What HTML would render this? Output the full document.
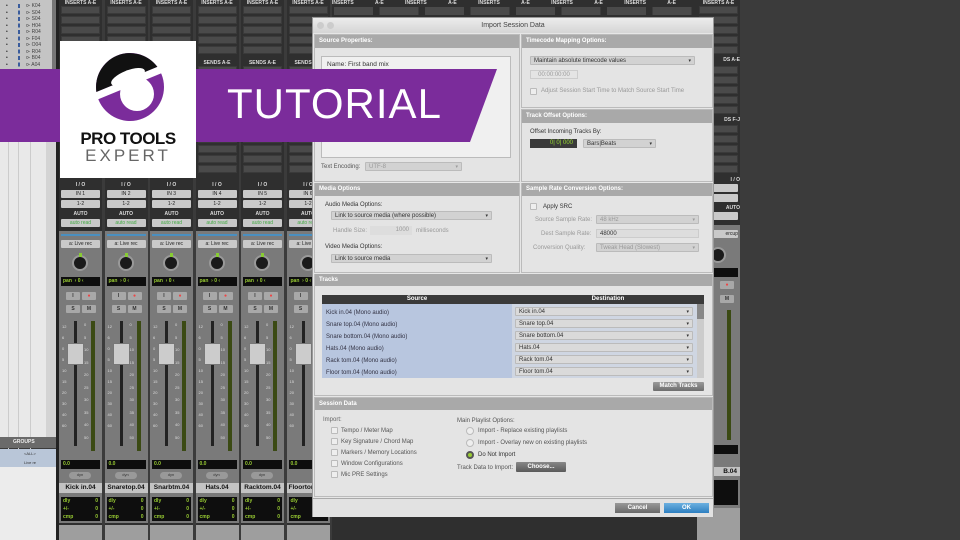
<!DOCTYPE html>
<html><head><meta charset="utf-8"><style>
*{margin:0;padding:0;box-sizing:border-box}
body{width:960px;height:540px;overflow:hidden;background:#3b3b3b;font-family:"Liberation Sans",sans-serif;position:relative}
.a{position:absolute}
.s{position:absolute;top:0;width:43px;height:540px;background:#2f2f2f}
.s .t{position:absolute;left:0;width:43px;text-align:center;color:#ddd;font-size:5px;font-weight:bold}
.sl{position:absolute;left:2px;width:39px;height:8px;background:#4a4a4a;border:1px solid #3a3a3a}
.bx{position:absolute;left:2px;width:39px;height:8px;background:#c9c9c9;border-radius:1px;font-size:5px;text-align:center;line-height:8px;color:#222}
.low{position:absolute;left:0;top:231px;width:43px;height:292px;background:#7a7a7a}
.blk{position:absolute;background:#0e0e0e;color:#9c3;font-size:5px;font-weight:bold;line-height:8px}
.btn{position:absolute;width:14px;height:8px;background:#a8a8a8;border-radius:1px;font-size:5px;text-align:center;line-height:8px;font-weight:bold;color:#333}
.sc{position:absolute;font-size:4px;color:#ddd}
.dlg{position:absolute;left:312px;top:17px;width:402px;height:500px;background:#e6e6e6;border:1px solid #999;font-size:6px;color:#333}
.ph{position:absolute;background:#a9a9a9;color:#fff;font-weight:bold;font-size:6px;line-height:13px;padding-left:4px}
.pn{position:absolute;background:#e4e4e4;border:1px solid #bbb}
.dd{position:absolute;height:9px;background:#d2d2d2;border:1px solid #bbb;border-radius:1px;font-size:6px;line-height:8px;padding-left:3px;color:#333}
.dd:after{content:"▾";position:absolute;right:3px;top:0;font-size:5px}
.cb{position:absolute;width:7px;height:7px;border:1px solid #bbb;background:#eee;border-radius:1px}
.rd{position:absolute;width:8px;height:8px;border:1px solid #bbb;background:#eee;border-radius:50%}
.g{color:#999}
</style></head><body>

<!-- left panel -->
<div class="a" style="left:0;top:0;width:56px;height:70px;background:#c4c4c4"></div>
<div class="a" style="left:52px;top:0;width:4px;height:70px;background:#777"></div>
<div class="a" style="left:0;top:142px;width:56px;height:296px;background:#e9e9e9"></div>
<div class="a" style="left:8px;top:142px;width:1px;height:380px;background:#ccc"></div>
<div class="a" style="left:18px;top:142px;width:1px;height:380px;background:#ccc"></div>
<div class="a" style="left:30px;top:142px;width:1px;height:380px;background:#ccc"></div>
<div class="a" style="left:46px;top:142px;width:10px;height:300px;background:#d4d4d4"></div>
<div class="a" style="left:0;top:449px;width:56px;height:91px;background:#ececec"></div>
<div class="a" style="left:0;top:437px;width:56px;height:11px;background:#6a6a6a;color:#eee;font-size:5px;font-weight:bold;line-height:11px;padding-left:13px">GROUPS</div>
<div class="a" style="left:0;top:449px;width:56px;height:18px;background:#b9c6d8;font-size:4px;line-height:9px;padding-left:24px;color:#333">&lt;ALL&gt;<br>Live re</div>
<div class="a" style="left:26px;top:3px;font-size:5px;line-height:6.5px;color:#444;white-space:nowrap">⊳ K04<br>⊳ S04<br>⊳ S04<br>⊳ H04<br>⊳ R04<br>⊳ F04<br>⊳ O04<br>⊳ R04<br>⊳ B04<br>⊳ A04</div>
<div class="a" style="left:6px;top:3px;font-size:5px;line-height:6.5px;color:#222">•<br>•<br>•<br>•<br>•<br>•<br>•<br>•<br>•<br>•</div>
<div class="a" style="left:18px;top:4px;width:2px;height:64px;background:repeating-linear-gradient(#3a5c9c 0 4px,transparent 4px 6.5px)"></div>
<div class="a" style="left:56px;top:0;width:3px;height:540px;background:#222"></div>

<!-- strips -->
<div class="s" style="left:59px">
<div class="t" style="top:0">INSERTS A-E</div>
<div class="sl" style="top:6px"></div><div class="sl" style="top:16px"></div><div class="sl" style="top:26px"></div><div class="sl" style="top:36px"></div><div class="sl" style="top:46px"></div>
<div class="t" style="top:60px">SENDS A-E</div>
<div class="sl" style="top:66px"></div><div class="sl" style="top:76px"></div><div class="sl" style="top:86px"></div><div class="sl" style="top:96px"></div><div class="sl" style="top:106px"></div>
<div class="sl" style="top:125px"></div><div class="sl" style="top:135px"></div><div class="sl" style="top:145px"></div><div class="sl" style="top:155px"></div><div class="sl" style="top:165px"></div>
<div class="t" style="top:182px">I / O</div><div class="bx" style="top:190px">IN 1</div><div class="bx" style="top:200px">1-2</div>
<div class="t" style="top:211px">AUTO</div><div class="bx" style="top:219px;color:#4a4">auto read</div>
<div class="low"><div class="a" style="left:2px;top:3px;width:39px;height:2px;background:#4a8fc0"></div><div class="bx" style="top:9px">a: Live rec</div>
<div class="a" style="left:13px;top:24px;width:16px;height:16px;border-radius:50%;background:#1a1a1a;border:2px solid #999"></div><div class="a" style="left:20px;top:22px;width:3px;height:4px;background:#8c3"></div>
<div class="blk" style="left:2px;top:46px;width:39px;height:9px;padding-left:2px">pan &nbsp;› 0 ‹</div>
<div class="btn" style="left:7px;top:61px">I</div><div class="btn" style="left:23px;top:61px;color:#e44">●</div>
<div class="btn" style="left:7px;top:74px">S</div><div class="btn" style="left:23px;top:74px">M</div>
<div class="a" style="left:15px;top:90px;width:3px;height:125px;background:#222"></div>
<div class="a" style="left:8px;top:112px;width:17px;height:22px;background:#ccc;border:1px solid #777"></div>
<div class="a" style="left:32px;top:90px;width:4px;height:130px;background:#3b4a14"></div>
<div class="sc" style="left:3px;top:90px;line-height:11px">12<br>6<br>0<br>5<br>10<br>15<br>20<br>30<br>40<br>60</div>
<div class="sc" style="left:25px;top:88px;line-height:12.5px">0<br>5<br>10<br>15<br>20<br>25<br>30<br>35<br>40<br>50</div>
<div class="blk" style="left:2px;top:229px;width:39px;height:9px;padding-left:2px">0.0</div>
<div class="a" style="left:10px;top:241px;width:22px;height:7px;border-radius:4px;background:#999;font-size:4px;text-align:center;color:#333">dyn</div>
<div class="a" style="left:0;top:252px;width:43px;height:10px;background:#c3c3c3;font-size:6.5px;font-weight:bold;text-align:center;line-height:10px;color:#111">Kick in.04</div>
<div class="blk" style="left:2px;top:266px;width:39px;height:24px;padding:0 2px;line-height:8px">dly<span style="float:right">0</span><br>+/-<span style="float:right">0</span><br>cmp<span style="float:right">0</span></div>
</div>
<div class="a" style="left:0;top:525px;width:43px;height:15px;background:#9e9e9e"></div>
</div>

<div class="s" style="left:104.5px">
<div class="t" style="top:0">INSERTS A-E</div>
<div class="sl" style="top:6px"></div><div class="sl" style="top:16px"></div><div class="sl" style="top:26px"></div><div class="sl" style="top:36px"></div><div class="sl" style="top:46px"></div>
<div class="t" style="top:60px">SENDS A-E</div>
<div class="sl" style="top:66px"></div><div class="sl" style="top:76px"></div><div class="sl" style="top:86px"></div><div class="sl" style="top:96px"></div><div class="sl" style="top:106px"></div>
<div class="sl" style="top:125px"></div><div class="sl" style="top:135px"></div><div class="sl" style="top:145px"></div><div class="sl" style="top:155px"></div><div class="sl" style="top:165px"></div>
<div class="t" style="top:182px">I / O</div><div class="bx" style="top:190px">IN 2</div><div class="bx" style="top:200px">1-2</div>
<div class="t" style="top:211px">AUTO</div><div class="bx" style="top:219px;color:#4a4">auto read</div>
<div class="low"><div class="a" style="left:2px;top:3px;width:39px;height:2px;background:#4a8fc0"></div><div class="bx" style="top:9px">a: Live rec</div>
<div class="a" style="left:13px;top:24px;width:16px;height:16px;border-radius:50%;background:#1a1a1a;border:2px solid #999"></div><div class="a" style="left:20px;top:22px;width:3px;height:4px;background:#8c3"></div>
<div class="blk" style="left:2px;top:46px;width:39px;height:9px;padding-left:2px">pan &nbsp;› 0 ‹</div>
<div class="btn" style="left:7px;top:61px">I</div><div class="btn" style="left:23px;top:61px;color:#e44">●</div>
<div class="btn" style="left:7px;top:74px">S</div><div class="btn" style="left:23px;top:74px">M</div>
<div class="a" style="left:15px;top:90px;width:3px;height:125px;background:#222"></div>
<div class="a" style="left:8px;top:112px;width:17px;height:22px;background:#ccc;border:1px solid #777"></div>
<div class="a" style="left:32px;top:90px;width:4px;height:130px;background:#3b4a14"></div>
<div class="sc" style="left:3px;top:90px;line-height:11px">12<br>6<br>0<br>5<br>10<br>15<br>20<br>30<br>40<br>60</div>
<div class="sc" style="left:25px;top:88px;line-height:12.5px">0<br>5<br>10<br>15<br>20<br>25<br>30<br>35<br>40<br>50</div>
<div class="blk" style="left:2px;top:229px;width:39px;height:9px;padding-left:2px">0.0</div>
<div class="a" style="left:10px;top:241px;width:22px;height:7px;border-radius:4px;background:#999;font-size:4px;text-align:center;color:#333">dyn</div>
<div class="a" style="left:0;top:252px;width:43px;height:10px;background:#c3c3c3;font-size:6.5px;font-weight:bold;text-align:center;line-height:10px;color:#111">Snaretop.04</div>
<div class="blk" style="left:2px;top:266px;width:39px;height:24px;padding:0 2px;line-height:8px">dly<span style="float:right">0</span><br>+/-<span style="float:right">0</span><br>cmp<span style="float:right">0</span></div>
</div>
<div class="a" style="left:0;top:525px;width:43px;height:15px;background:#9e9e9e"></div>
</div>

<div class="s" style="left:150px">
<div class="t" style="top:0">INSERTS A-E</div>
<div class="sl" style="top:6px"></div><div class="sl" style="top:16px"></div><div class="sl" style="top:26px"></div><div class="sl" style="top:36px"></div><div class="sl" style="top:46px"></div>
<div class="t" style="top:60px">SENDS A-E</div>
<div class="sl" style="top:66px"></div><div class="sl" style="top:76px"></div><div class="sl" style="top:86px"></div><div class="sl" style="top:96px"></div><div class="sl" style="top:106px"></div>
<div class="sl" style="top:125px"></div><div class="sl" style="top:135px"></div><div class="sl" style="top:145px"></div><div class="sl" style="top:155px"></div><div class="sl" style="top:165px"></div>
<div class="t" style="top:182px">I / O</div><div class="bx" style="top:190px">IN 3</div><div class="bx" style="top:200px">1-2</div>
<div class="t" style="top:211px">AUTO</div><div class="bx" style="top:219px;color:#4a4">auto read</div>
<div class="low"><div class="a" style="left:2px;top:3px;width:39px;height:2px;background:#4a8fc0"></div><div class="bx" style="top:9px">a: Live rec</div>
<div class="a" style="left:13px;top:24px;width:16px;height:16px;border-radius:50%;background:#1a1a1a;border:2px solid #999"></div><div class="a" style="left:20px;top:22px;width:3px;height:4px;background:#8c3"></div>
<div class="blk" style="left:2px;top:46px;width:39px;height:9px;padding-left:2px">pan &nbsp;› 0 ‹</div>
<div class="btn" style="left:7px;top:61px">I</div><div class="btn" style="left:23px;top:61px;color:#e44">●</div>
<div class="btn" style="left:7px;top:74px">S</div><div class="btn" style="left:23px;top:74px">M</div>
<div class="a" style="left:15px;top:90px;width:3px;height:125px;background:#222"></div>
<div class="a" style="left:8px;top:112px;width:17px;height:22px;background:#ccc;border:1px solid #777"></div>
<div class="a" style="left:32px;top:90px;width:4px;height:130px;background:#3b4a14"></div>
<div class="sc" style="left:3px;top:90px;line-height:11px">12<br>6<br>0<br>5<br>10<br>15<br>20<br>30<br>40<br>60</div>
<div class="sc" style="left:25px;top:88px;line-height:12.5px">0<br>5<br>10<br>15<br>20<br>25<br>30<br>35<br>40<br>50</div>
<div class="blk" style="left:2px;top:229px;width:39px;height:9px;padding-left:2px">0.0</div>
<div class="a" style="left:10px;top:241px;width:22px;height:7px;border-radius:4px;background:#999;font-size:4px;text-align:center;color:#333">dyn</div>
<div class="a" style="left:0;top:252px;width:43px;height:10px;background:#c3c3c3;font-size:6.5px;font-weight:bold;text-align:center;line-height:10px;color:#111">Snarbtm.04</div>
<div class="blk" style="left:2px;top:266px;width:39px;height:24px;padding:0 2px;line-height:8px">dly<span style="float:right">0</span><br>+/-<span style="float:right">0</span><br>cmp<span style="float:right">0</span></div>
</div>
<div class="a" style="left:0;top:525px;width:43px;height:15px;background:#9e9e9e"></div>
</div>

<div class="s" style="left:195.5px">
<div class="t" style="top:0">INSERTS A-E</div>
<div class="sl" style="top:6px"></div><div class="sl" style="top:16px"></div><div class="sl" style="top:26px"></div><div class="sl" style="top:36px"></div><div class="sl" style="top:46px"></div>
<div class="t" style="top:60px">SENDS A-E</div>
<div class="sl" style="top:66px"></div><div class="sl" style="top:76px"></div><div class="sl" style="top:86px"></div><div class="sl" style="top:96px"></div><div class="sl" style="top:106px"></div>
<div class="sl" style="top:125px"></div><div class="sl" style="top:135px"></div><div class="sl" style="top:145px"></div><div class="sl" style="top:155px"></div><div class="sl" style="top:165px"></div>
<div class="t" style="top:182px">I / O</div><div class="bx" style="top:190px">IN 4</div><div class="bx" style="top:200px">1-2</div>
<div class="t" style="top:211px">AUTO</div><div class="bx" style="top:219px;color:#4a4">auto read</div>
<div class="low"><div class="a" style="left:2px;top:3px;width:39px;height:2px;background:#4a8fc0"></div><div class="bx" style="top:9px">a: Live rec</div>
<div class="a" style="left:13px;top:24px;width:16px;height:16px;border-radius:50%;background:#1a1a1a;border:2px solid #999"></div><div class="a" style="left:20px;top:22px;width:3px;height:4px;background:#8c3"></div>
<div class="blk" style="left:2px;top:46px;width:39px;height:9px;padding-left:2px">pan &nbsp;› 0 ‹</div>
<div class="btn" style="left:7px;top:61px">I</div><div class="btn" style="left:23px;top:61px;color:#e44">●</div>
<div class="btn" style="left:7px;top:74px">S</div><div class="btn" style="left:23px;top:74px">M</div>
<div class="a" style="left:15px;top:90px;width:3px;height:125px;background:#222"></div>
<div class="a" style="left:8px;top:112px;width:17px;height:22px;background:#ccc;border:1px solid #777"></div>
<div class="a" style="left:32px;top:90px;width:4px;height:130px;background:#3b4a14"></div>
<div class="sc" style="left:3px;top:90px;line-height:11px">12<br>6<br>0<br>5<br>10<br>15<br>20<br>30<br>40<br>60</div>
<div class="sc" style="left:25px;top:88px;line-height:12.5px">0<br>5<br>10<br>15<br>20<br>25<br>30<br>35<br>40<br>50</div>
<div class="blk" style="left:2px;top:229px;width:39px;height:9px;padding-left:2px">0.0</div>
<div class="a" style="left:10px;top:241px;width:22px;height:7px;border-radius:4px;background:#999;font-size:4px;text-align:center;color:#333">dyn</div>
<div class="a" style="left:0;top:252px;width:43px;height:10px;background:#c3c3c3;font-size:6.5px;font-weight:bold;text-align:center;line-height:10px;color:#111">Hats.04</div>
<div class="blk" style="left:2px;top:266px;width:39px;height:24px;padding:0 2px;line-height:8px">dly<span style="float:right">0</span><br>+/-<span style="float:right">0</span><br>cmp<span style="float:right">0</span></div>
</div>
<div class="a" style="left:0;top:525px;width:43px;height:15px;background:#9e9e9e"></div>
</div>

<div class="s" style="left:241px">
<div class="t" style="top:0">INSERTS A-E</div>
<div class="sl" style="top:6px"></div><div class="sl" style="top:16px"></div><div class="sl" style="top:26px"></div><div class="sl" style="top:36px"></div><div class="sl" style="top:46px"></div>
<div class="t" style="top:60px">SENDS A-E</div>
<div class="sl" style="top:66px"></div><div class="sl" style="top:76px"></div><div class="sl" style="top:86px"></div><div class="sl" style="top:96px"></div><div class="sl" style="top:106px"></div>
<div class="sl" style="top:125px"></div><div class="sl" style="top:135px"></div><div class="sl" style="top:145px"></div><div class="sl" style="top:155px"></div><div class="sl" style="top:165px"></div>
<div class="t" style="top:182px">I / O</div><div class="bx" style="top:190px">IN 5</div><div class="bx" style="top:200px">1-2</div>
<div class="t" style="top:211px">AUTO</div><div class="bx" style="top:219px;color:#4a4">auto read</div>
<div class="low"><div class="a" style="left:2px;top:3px;width:39px;height:2px;background:#4a8fc0"></div><div class="bx" style="top:9px">a: Live rec</div>
<div class="a" style="left:13px;top:24px;width:16px;height:16px;border-radius:50%;background:#1a1a1a;border:2px solid #999"></div><div class="a" style="left:20px;top:22px;width:3px;height:4px;background:#8c3"></div>
<div class="blk" style="left:2px;top:46px;width:39px;height:9px;padding-left:2px">pan &nbsp;› 0 ‹</div>
<div class="btn" style="left:7px;top:61px">I</div><div class="btn" style="left:23px;top:61px;color:#e44">●</div>
<div class="btn" style="left:7px;top:74px">S</div><div class="btn" style="left:23px;top:74px">M</div>
<div class="a" style="left:15px;top:90px;width:3px;height:125px;background:#222"></div>
<div class="a" style="left:8px;top:112px;width:17px;height:22px;background:#ccc;border:1px solid #777"></div>
<div class="a" style="left:32px;top:90px;width:4px;height:130px;background:#3b4a14"></div>
<div class="sc" style="left:3px;top:90px;line-height:11px">12<br>6<br>0<br>5<br>10<br>15<br>20<br>30<br>40<br>60</div>
<div class="sc" style="left:25px;top:88px;line-height:12.5px">0<br>5<br>10<br>15<br>20<br>25<br>30<br>35<br>40<br>50</div>
<div class="blk" style="left:2px;top:229px;width:39px;height:9px;padding-left:2px">0.0</div>
<div class="a" style="left:10px;top:241px;width:22px;height:7px;border-radius:4px;background:#999;font-size:4px;text-align:center;color:#333">dyn</div>
<div class="a" style="left:0;top:252px;width:43px;height:10px;background:#c3c3c3;font-size:6.5px;font-weight:bold;text-align:center;line-height:10px;color:#111">Racktom.04</div>
<div class="blk" style="left:2px;top:266px;width:39px;height:24px;padding:0 2px;line-height:8px">dly<span style="float:right">0</span><br>+/-<span style="float:right">0</span><br>cmp<span style="float:right">0</span></div>
</div>
<div class="a" style="left:0;top:525px;width:43px;height:15px;background:#9e9e9e"></div>
</div>

<div class="s" style="left:286.5px">
<div class="t" style="top:0">INSERTS A-E</div>
<div class="sl" style="top:6px"></div><div class="sl" style="top:16px"></div><div class="sl" style="top:26px"></div><div class="sl" style="top:36px"></div><div class="sl" style="top:46px"></div>
<div class="t" style="top:60px">SENDS A-E</div>
<div class="sl" style="top:66px"></div><div class="sl" style="top:76px"></div><div class="sl" style="top:86px"></div><div class="sl" style="top:96px"></div><div class="sl" style="top:106px"></div>
<div class="sl" style="top:125px"></div><div class="sl" style="top:135px"></div><div class="sl" style="top:145px"></div><div class="sl" style="top:155px"></div><div class="sl" style="top:165px"></div>
<div class="t" style="top:182px">I / O</div><div class="bx" style="top:190px">IN 6</div><div class="bx" style="top:200px">1-2</div>
<div class="t" style="top:211px">AUTO</div><div class="bx" style="top:219px;color:#4a4">auto read</div>
<div class="low"><div class="a" style="left:2px;top:3px;width:39px;height:2px;background:#4a8fc0"></div><div class="bx" style="top:9px">a: Live rec</div>
<div class="a" style="left:13px;top:24px;width:16px;height:16px;border-radius:50%;background:#1a1a1a;border:2px solid #999"></div>
<div class="blk" style="left:2px;top:46px;width:39px;height:9px;padding-left:2px">pan &nbsp;› 0 ‹</div>
<div class="btn" style="left:7px;top:61px">I</div>
<div class="btn" style="left:7px;top:74px">S</div>
<div class="a" style="left:15px;top:90px;width:3px;height:125px;background:#222"></div>
<div class="a" style="left:8px;top:112px;width:17px;height:22px;background:#ccc;border:1px solid #777"></div>
<div class="sc" style="left:3px;top:90px;line-height:11px">12<br>6<br>0<br>5<br>10<br>15<br>20<br>30<br>40<br>60</div>
<div class="blk" style="left:2px;top:229px;width:39px;height:9px;padding-left:2px">0.0</div>
<div class="a" style="left:0;top:252px;width:43px;height:10px;background:#c3c3c3;font-size:6.5px;font-weight:bold;line-height:10px;color:#111;padding-left:2px">Floortom.04</div>
<div class="blk" style="left:2px;top:266px;width:39px;height:24px;padding:0 2px;line-height:8px">dly<br>+/-<br>cmp</div>
</div>
<div class="a" style="left:0;top:525px;width:43px;height:15px;background:#9e9e9e"></div>
</div>

<!-- strips behind dialog: tops -->
<div class="a" style="left:332px;top:0;width:408px;height:540px;background:#2f2f2f"></div>
<div class="a" style="left:332px;top:0;width:408px;font-size:5px;font-weight:bold;color:#ddd;word-spacing:20px;white-space:nowrap;overflow:hidden">INSERTS&nbsp;A-E INSERTS&nbsp;A-E INSERTS&nbsp;A-E INSERTS&nbsp;A-E INSERTS&nbsp;A-E INSERTS&nbsp;A-E INSERTS&nbsp;A-E INSERTS&nbsp;A-E</div>
<div class="a" style="left:334px;top:7px;width:404px;height:8px;background:repeating-linear-gradient(90deg,#4a4a4a 0 39px,#2f2f2f 39px 45.5px)"></div>

<!-- last visible strip -->
<div class="s" style="left:697px">
<div class="t" style="top:0">INSERTS A-E</div>
<div class="sl" style="top:6px"></div><div class="sl" style="top:16px"></div><div class="sl" style="top:26px"></div><div class="sl" style="top:36px"></div><div class="sl" style="top:46px"></div>
<div class="t" style="top:57px;text-align:right">DS A-E</div>
<div class="sl" style="top:66px"></div><div class="sl" style="top:76px"></div><div class="sl" style="top:86px"></div><div class="sl" style="top:96px"></div><div class="sl" style="top:106px"></div>
<div class="t" style="top:117px;text-align:right">DS F-J</div>
<div class="sl" style="top:125px"></div><div class="sl" style="top:135px"></div><div class="sl" style="top:145px"></div><div class="sl" style="top:155px"></div><div class="sl" style="top:165px"></div>
<div class="t" style="top:177px;text-align:right">I / O</div><div class="bx" style="top:184px"></div><div class="bx" style="top:194px"></div>
<div class="t" style="top:205px;text-align:right">AUTO</div><div class="bx" style="top:212px;color:#4a4"></div>
<div class="low" style="top:225px"><div class="bx" style="top:5px;text-align:right">ercup</div>
<div class="a" style="left:13px;top:22px;width:16px;height:16px;border-radius:50%;background:#1a1a1a;border:2px solid #999"></div>
<div class="blk" style="left:2px;top:43px;width:39px;height:9px"></div>
<div class="btn" style="left:23px;top:56px;color:#e44">●</div><div class="btn" style="left:23px;top:70px">M</div>
<div class="a" style="left:30px;top:85px;width:4px;height:130px;background:#3b4a14"></div>
<div class="blk" style="left:2px;top:220px;width:39px;height:9px"></div>
<div class="a" style="left:0;top:242px;width:43px;height:9px;background:#c3c3c3;font-size:6.5px;font-weight:bold;text-align:right;line-height:9px;color:#111;padding-right:3px">B.04</div>
<div class="blk" style="left:2px;top:255px;width:39px;height:25px"></div>
</div>
<div class="a" style="left:0;top:508px;width:43px;height:32px;background:#9e9e9e"></div>
</div>
<div class="a" style="left:740px;top:0;width:220px;height:540px;background:#3b3b3b"></div>

<!-- dialog -->
<div class="dlg">
<div class="a" style="left:0;top:0;width:400px;height:15px;background:linear-gradient(#ececec,#d5d5d5);text-align:center;font-size:7px;line-height:15px;color:#444">Import Session Data</div>
<div class="a" style="left:4px;top:4px;width:7px;height:7px;border-radius:50%;background:#ccc"></div><div class="a" style="left:14px;top:4px;width:7px;height:7px;border-radius:50%;background:#ccc"></div>
<div class="pn" style="left:1px;top:16px;width:206px;height:148px"></div>
<div class="ph" style="left:2px;top:17px;width:204px">Source Properties:</div>
<div class="a" style="left:8px;top:38px;width:190px;height:102px;background:#f0f0f0;border:1px solid #bbb;font-size:6.5px;padding:3px 5px;line-height:9px">Name: First band mix<br>Type: Current Session</div>
<div class="a g" style="left:8px;top:146px;color:#555">Text Encoding:</div><div class="dd g" style="left:52px;top:144px;width:97px">UTF-8</div>

<div class="pn" style="left:208px;top:16px;width:192px;height:74px"></div>
<div class="ph" style="left:209px;top:17px;width:190px">Timecode Mapping Options:</div>
<div class="dd" style="left:217px;top:38px;width:165px">Maintain absolute timecode values</div>
<div class="a g" style="left:217px;top:52px;width:48px;height:9px;border:1px solid #ccc;text-align:center;line-height:8px">00:00:00:00</div>
<div class="cb" style="left:217px;top:70px"></div><div class="a g" style="left:228px;top:70px">Adjust Session Start Time to Match Source Start Time</div>

<div class="pn" style="left:208px;top:91px;width:192px;height:73px"></div>
<div class="ph" style="left:209px;top:92px;width:190px">Track Offset Options:</div>
<div class="a" style="left:217px;top:111px">Offset Incoming Tracks By:</div>
<div class="a" style="left:217px;top:121px;width:47px;height:9px;background:#3a3a3a;color:#9d3;text-align:right;padding-right:4px;line-height:9px">0| 0| 000</div>
<div class="dd" style="left:270px;top:121px;width:73px">Bars|Beats</div>

<div class="pn" style="left:1px;top:165px;width:206px;height:90px"></div>
<div class="ph" style="left:2px;top:165px;width:204px">Media Options</div>
<div class="a" style="left:12px;top:184px">Audio Media Options:</div>
<div class="dd" style="left:18px;top:193px;width:161px">Link to source media (where possible)</div>
<div class="a g" style="left:20px;top:210px">Handle Size:</div><div class="a g" style="left:57px;top:208px;width:42px;height:9px;background:#ddd;text-align:right;padding-right:3px;line-height:9px">1000</div><div class="a g" style="left:103px;top:210px">milliseconds</div>
<div class="a" style="left:12px;top:226px">Video Media Options:</div>
<div class="dd" style="left:18px;top:236px;width:161px">Link to source media</div>

<div class="pn" style="left:208px;top:165px;width:192px;height:90px"></div>
<div class="ph" style="left:209px;top:165px;width:190px">Sample Rate Conversion Options:</div>
<div class="cb" style="left:217px;top:185px"></div><div class="a" style="left:230px;top:186px">Apply SRC</div>
<div class="a g" style="left:222px;top:199px">Source Sample Rate:</div><div class="dd g" style="left:283px;top:197px;width:103px">48 kHz</div>
<div class="a g" style="left:228px;top:213px">Dest Sample Rate:</div><div class="a" style="left:283px;top:211px;width:103px;height:9px;background:#ddd;border:1px solid #ccc;padding-left:3px;line-height:8px">48000</div>
<div class="a g" style="left:220px;top:227px">Conversion Quality:</div><div class="dd g" style="left:283px;top:225px;width:103px">Tweak Head (Slowest)</div>

<div class="pn" style="left:1px;top:256px;width:399px;height:122px"></div>
<div class="ph" style="left:2px;top:256px;width:397px;line-height:12px">Tracks</div>
<div class="a" style="left:9px;top:277px;width:382px;height:83px;background:#b8c6df"></div>
<div class="a" style="left:9px;top:277px;width:382px;height:9px;background:#3a3a3a;color:#fff;font-weight:bold;font-size:6px;line-height:9px"><span class="a" style="left:0;width:190px;text-align:center">Source</span><span class="a" style="left:190px;width:192px;text-align:center">Destination</span></div>
<div class="a" style="left:199px;top:286px;width:185px;height:74px;background:#cfd6e2"></div>
<div class="a" style="left:384px;top:286px;width:7px;height:74px;background:#ccc"></div>
<div class="a" style="left:384px;top:286px;width:7px;height:15px;background:#888"></div>
<div class="a" style="left:13px;top:289px;line-height:12px;font-size:6px;color:#334">Kick in.04 (Mono audio)<br>Snare top.04 (Mono audio)<br>Snare bottom.04 (Mono audio)<br>Hats.04 (Mono audio)<br>Rack tom.04 (Mono audio)<br>Floor tom.04 (Mono audio)</div>
<div class="dd" style="left:202px;top:289px;width:178px;background:#dadada">Kick in.04</div>
<div class="dd" style="left:202px;top:301px;width:178px;background:#dadada">Snare top.04</div>
<div class="dd" style="left:202px;top:313px;width:178px;background:#dadada">Snare bottom.04</div>
<div class="dd" style="left:202px;top:325px;width:178px;background:#dadada">Hats.04</div>
<div class="dd" style="left:202px;top:337px;width:178px;background:#dadada">Rack tom.04</div>
<div class="dd" style="left:202px;top:349px;width:178px;background:#dadada">Floor tom.04</div>
<div class="a" style="left:340px;top:364px;width:51px;height:9px;background:linear-gradient(#999,#6e6e6e);color:#fff;font-weight:bold;text-align:center;line-height:9px;border-radius:1px">Match Tracks</div>

<div class="pn" style="left:1px;top:379px;width:399px;height:100px"></div>
<div class="ph" style="left:2px;top:380px;width:397px;line-height:12px">Session Data</div>
<div class="a" style="left:10px;top:399px;color:#666">Import:</div>
<div class="cb" style="left:18px;top:409px"></div><div class="a" style="left:28px;top:410px;color:#555">Tempo / Meter Map</div>
<div class="cb" style="left:18px;top:420px"></div><div class="a" style="left:28px;top:421px;color:#555">Key Signature / Chord Map</div>
<div class="cb" style="left:18px;top:431px"></div><div class="a" style="left:28px;top:432px;color:#555">Markers / Memory Locations</div>
<div class="cb" style="left:18px;top:442px"></div><div class="a" style="left:28px;top:443px;color:#555">Window Configurations</div>
<div class="cb" style="left:18px;top:453px"></div><div class="a" style="left:28px;top:454px;color:#555">Mic PRE Settings</div>
<div class="a" style="left:144px;top:400px;color:#555">Main Playlist Options:</div>
<div class="rd" style="left:153px;top:409px"></div><div class="a" style="left:165px;top:410px;color:#555">Import - Replace existing playlists</div>
<div class="rd" style="left:153px;top:421px"></div><div class="a" style="left:165px;top:422px;color:#555">Import - Overlay new on existing playlists</div>
<div class="rd" style="left:153px;top:433px;background:#9c3;border:2px solid #555"></div><div class="a" style="left:165px;top:434px">Do Not Import</div>
<div class="a" style="left:144px;top:447px;color:#555">Track Data to Import:</div>
<div class="a" style="left:203px;top:444px;width:50px;height:10px;background:linear-gradient(#888,#5a5a5a);color:#fff;font-weight:bold;text-align:center;line-height:10px;border-radius:1px">Choose...</div>

<div class="a" style="left:0;top:480px;width:400px;height:19px;background:#e2e2e2;border-top:1px solid #aaa"></div>
<div class="a" style="left:302px;top:485px;width:45px;height:10px;background:linear-gradient(#999,#6a6a6a);color:#fff;font-weight:bold;text-align:center;line-height:10px">Cancel</div>
<div class="a" style="left:351px;top:485px;width:45px;height:10px;background:linear-gradient(#6cb0e0,#2d7fc0);color:#fff;font-weight:bold;text-align:center;line-height:10px">OK</div>
</div>

<!-- banner -->
<svg class="a" style="left:0;top:0" width="960" height="540">
<polygon points="0,69 497,69 470,142 0,142" fill="#7b2c9b"/>
</svg>
<div class="a" style="left:227px;top:79px;font-size:42px;color:#fff;letter-spacing:1px;font-weight:normal;line-height:50px">TUTORIAL</div>
<div class="a" style="left:60px;top:41px;width:136px;height:137px;background:#fff"></div>
<svg class="a" style="left:60px;top:41px" width="136" height="137">
<circle cx="70" cy="46" r="34" fill="#7b2c9b"/>
<circle cx="77" cy="53" r="17" fill="#fff"/>
<path d="M36.4,51 A34,34 0 0 1 97.4,25.9 Z" fill="#111"/>
<ellipse cx="68" cy="36" rx="18" ry="6.5" transform="rotate(-22 68 36)" fill="#fff"/>
<polygon points="0,66 136,10 136,18 0,74" fill="#fff"/>
</svg>
<div class="a" style="left:60px;top:129px;width:136px;text-align:center;font-size:17px;font-weight:bold;color:#111;letter-spacing:-0.5px">PRO TOOLS</div>
<div class="a" style="left:60px;top:146px;width:136px;text-align:center;font-size:17px;color:#666;letter-spacing:3px">EXPERT</div>
</body></html>
